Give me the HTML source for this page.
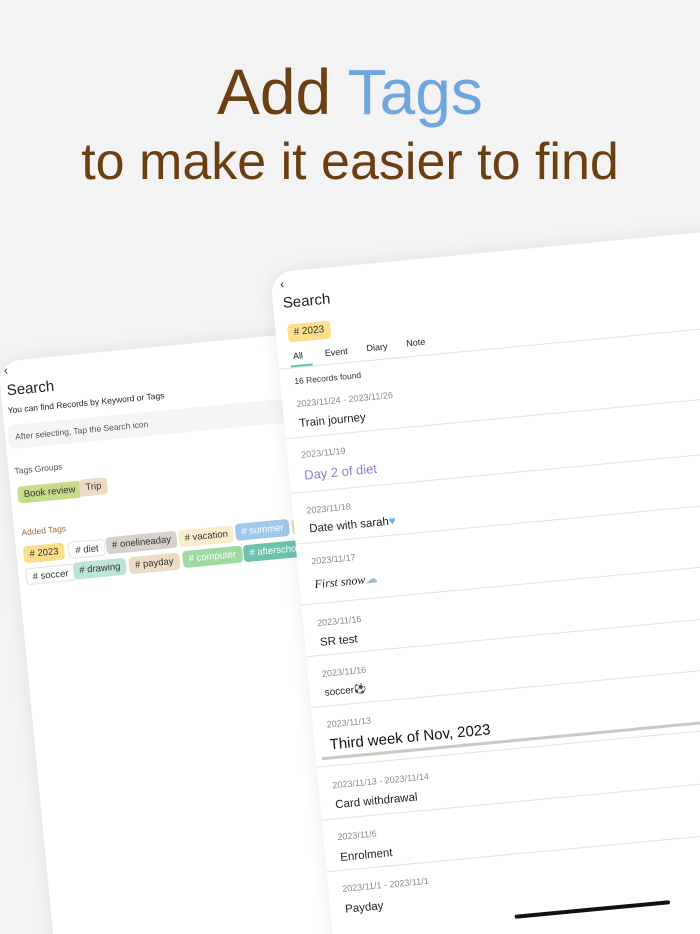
<!DOCTYPE html>
<html><head><meta charset="utf-8"><style>
*{margin:0;padding:0;box-sizing:border-box}
html,body{width:700px;height:934px;overflow:hidden}
body{background:#f3f3f3;font-family:"Liberation Sans",sans-serif}
#w{position:relative;width:700px;height:934px;overflow:hidden}
.h1{position:absolute;top:52px;left:0;width:700px;text-align:center;font-size:64px;color:#6b3f12;line-height:80px}
.h1 span{color:#70a6de}
.h2{position:absolute;top:132px;left:0;width:700px;text-align:center;font-size:52px;color:#6b3f12;line-height:60px}
.card{position:absolute;background:#fff;transform-origin:0 0;border-radius:22px;box-shadow:0 0 18px rgba(0,0,0,.08)}
.a{position:absolute;white-space:nowrap}
.chip{position:absolute;height:17px;line-height:17px;border-radius:4px;padding:0 6px;font-size:9.5px;color:#333;white-space:nowrap}
.d{position:absolute;font-size:9px;color:#8a8a8a;white-space:nowrap}
.t{position:absolute;font-size:11.5px;color:#222;white-space:nowrap}
.s{position:absolute;left:0;width:640px;height:1px;background:#e2e2e2}
</style></head><body><div id="w">
<div class="h1">Add <span>Tags</span></div>
<div class="h2">to make it easier to find</div>

<div class="card" style="left:-2px;top:362px;width:510px;height:1000px;transform:rotate(-5.5deg)">
  <div class="a" style="left:5px;top:2px;font-size:12px;color:#333">&lsaquo;</div>
  <div class="a" style="left:6px;top:21px;font-size:15px;color:#222">Search</div>
  <div class="a" style="left:5px;top:44px;font-size:8.5px;color:#222">You can find Records by Keyword or Tags</div>
  <div class="a" style="left:3px;top:64px;width:520px;height:24px;background:#f5f5f5;border-radius:6px"></div>
  <div class="a" style="left:10px;top:71px;font-size:8.5px;color:#555">After selecting, Tap the Search icon</div>
  <div class="a" style="left:6px;top:105px;font-size:8.5px;color:#555">Tags Groups</div>
  <div class="chip" style="left:7px;top:126px;background:#c6dc88">Book review</div>
  <div class="chip" style="left:69px;top:125px;background:#ecdcc6">Trip</div>
  <div class="a" style="left:7px;top:167px;font-size:8.5px;color:#9a6a3a">Added Tags</div>
  <div class="chip" style="left:7px;top:186px;background:#fbdf8c"># 2023</div>
  <div class="chip" style="left:52px;top:186px;background:#fff;border:1px solid #e4e4e4"># diet</div>
  <div class="chip" style="left:90px;top:185px;background:#d6d1ca"># onelineaday</div>
  <div class="chip" style="left:163px;top:185px;background:#f8eecb"># vacation</div>
  <div class="chip" style="left:220px;top:184px;background:#a0c8ec;color:#fff"># summer</div>
  <div class="chip" style="left:277px;top:184px;background:#f3d3b0"># trip</div>
  <div class="chip" style="left:7px;top:208px;background:#fff;border:1px solid #e4e4e4"># soccer</div>
  <div class="chip" style="left:55px;top:207px;background:#bce4d7"># drawing</div>
  <div class="chip" style="left:111px;top:207px;background:#ecdcc4"># payday</div>
  <div class="chip" style="left:165px;top:206px;background:#9fd9a2;color:#fff"># computer</div>
  <div class="chip" style="left:226px;top:206px;background:#6cc3ad;color:#fff"># afterschool</div>
</div>

<div class="card" style="left:270px;top:273px;width:640px;height:1000px;transform:rotate(-5.4deg)">
  <div class="a" style="left:9px;top:5px;font-size:12px;color:#333">&lsaquo;</div>
  <div class="a" style="left:10px;top:23px;font-size:15px;color:#222">Search</div>
  <div class="chip" style="left:12px;top:53px;background:#fbdf8c;height:18px;line-height:18px;font-size:10px"># 2023</div>
  <div class="a" style="left:15px;top:80px;font-size:9px;color:#222">All</div>
  <div class="a" style="left:12px;top:94px;width:22px;height:2px;background:#5cc8a8"></div>
  <div class="a" style="left:47px;top:80px;font-size:9px;color:#222">Event</div>
  <div class="a" style="left:89px;top:79px;font-size:9px;color:#222">Diary</div>
  <div class="a" style="left:129px;top:78px;font-size:9px;color:#222">Note</div>
  <div class="s" style="top:96px"></div>
  <div class="d" style="left:14px;top:105px;font-size:8.5px;color:#333">16 Records found</div>
  <div class="d" style="left:14px;top:128px">2023/11/24 - 2023/11/26</div>
  <div class="t" style="left:15px;top:147px">Train journey</div>
  <div class="s" style="top:166px"></div>
  <div class="d" style="left:14px;top:179px">2023/11/19</div>
  <div class="t" style="left:15px;top:197px;font-size:13px;color:#8a7fd0">Day 2 of diet</div>
  <div class="s" style="top:221px"></div>
  <div class="d" style="left:14px;top:235px">2023/11/18</div>
  <div class="t" style="left:15px;top:253px">Date with sarah<span style="color:#5bb8f0">&#9829;</span></div>
  <div class="s" style="top:272px"></div>
  <div class="d" style="left:14px;top:286px">2023/11/17</div>
  <div class="t" style="left:15px;top:307px;font-size:12px;font-style:italic;font-family:'Liberation Serif',serif">First snow<span style="color:#9bc">&#9729;</span></div>
  <div class="s" style="top:333px"></div>
  <div class="d" style="left:14px;top:348px">2023/11/16</div>
  <div class="t" style="left:15px;top:367px">SR test</div>
  <div class="s" style="top:385px"></div>
  <div class="d" style="left:14px;top:399px">2023/11/16</div>
  <div class="t" style="left:15px;top:418px;font-size:10px">soccer&#9917;</div>
  <div class="s" style="top:436px"></div>
  <div class="d" style="left:14px;top:450px">2023/11/13</div>
  <div class="t" style="left:15px;top:467px;font-size:15px;color:#111">Third week of Nov, 2023</div>
  <div class="a" style="left:6px;top:487px;width:640px;height:3px;background:#cdc8c0"></div>
  <div class="s" style="top:496px"></div>
  <div class="d" style="left:14px;top:511px">2023/11/13 - 2023/11/14</div>
  <div class="t" style="left:15px;top:530px">Card withdrawal</div>
  <div class="s" style="top:549px"></div>
  <div class="d" style="left:14px;top:563px">2023/11/6</div>
  <div class="t" style="left:15px;top:583px">Enrolment</div>
  <div class="s" style="top:601px"></div>
  <div class="d" style="left:14px;top:615px">2023/11/1 - 2023/11/1</div>
  <div class="t" style="left:15px;top:635px">Payday</div>
  <div class="a" style="left:183px;top:662px;width:156px;height:4px;border-radius:2px;background:#111"></div>
</div>
</div></body></html>
